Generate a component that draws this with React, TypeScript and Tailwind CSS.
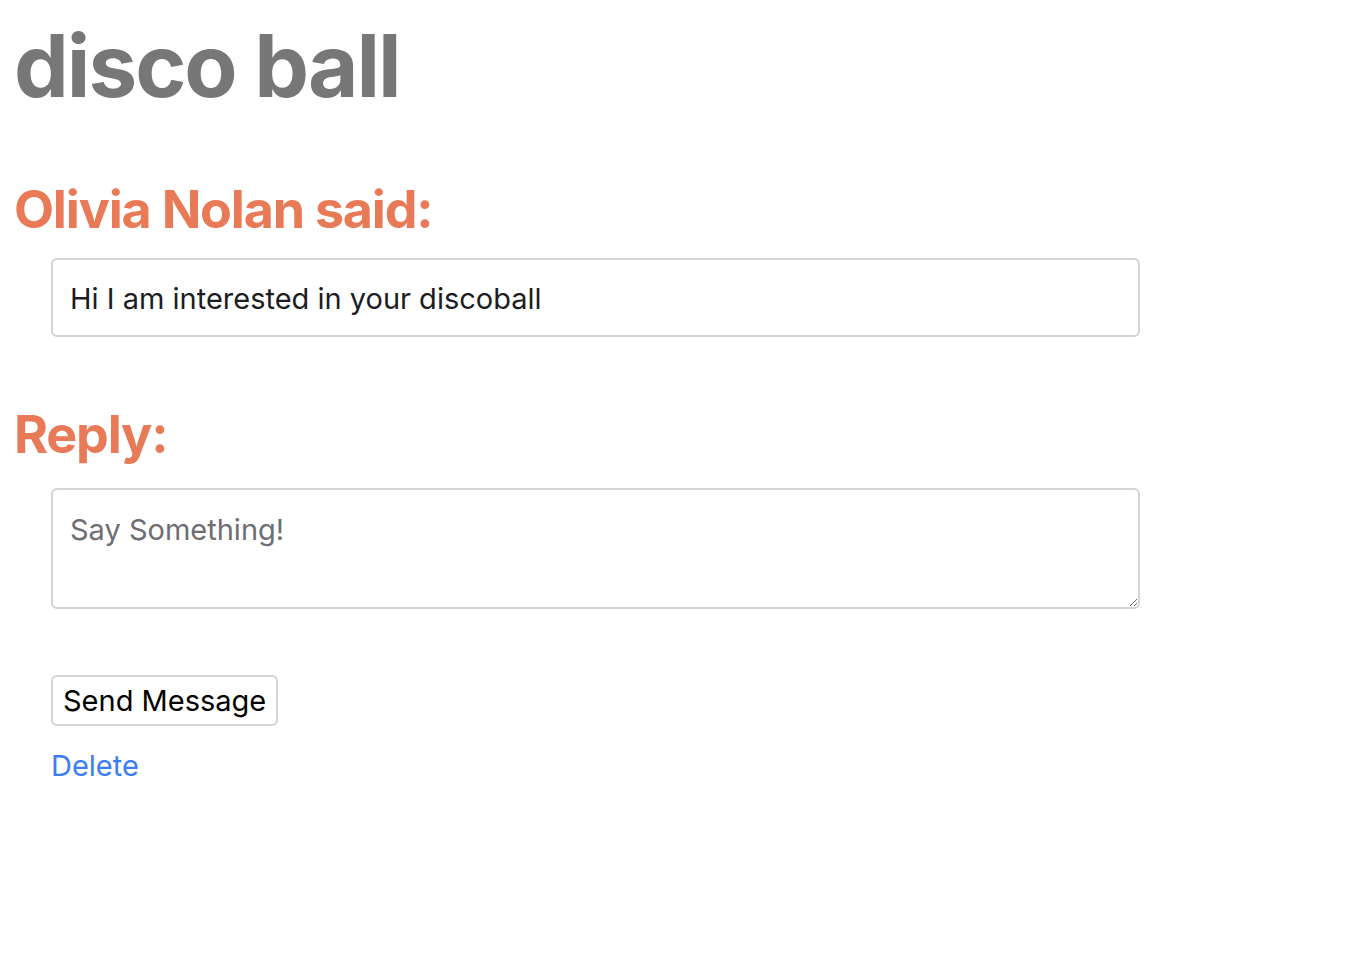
import React from "react";

export default function App() {
  return (
    <div className="min-h-[978px] bg-white px-[14px] pt-[18px]" style={{ fontFamily: "Inter, 'Noto Sans', sans-serif" }}>
      <h1 className="text-[87px] font-bold leading-[96px] tracking-[-2px] text-[#777777]">disco ball</h1>
      <h2 className="mt-[66px] text-[52px] font-bold leading-[60px] tracking-[-1.2px] text-[#e97a57]">Olivia Nolan said:</h2>
      <div className="ml-[37px] mt-[18px] flex h-[79px] w-[1089px] items-center rounded-[6px] border-2 border-[#d2d4d8] px-[17px] pt-[3px] text-[29px] leading-[36px] text-[#1d1d1f]">
        Hi I am interested in your discoball
      </div>
      <h2 className="mt-[68px] text-[52px] font-bold leading-[60px] tracking-[-1.2px] text-[#e97a57]">Reply:</h2>
      <div className="ml-[37px] mt-[23px] w-[1089px]">
        <textarea
          placeholder="Say Something!"
          className="block h-[121px] w-full rounded-[6px] border-2 border-[#d2d4d8] px-[17px] pt-[22px] pb-[18px] text-[29px] leading-[36px] text-[#1d1d1f] placeholder:text-[#6e6e73] outline-none"
        />
        <button className="mt-[66px] h-[51px] rounded-[6px] border-2 border-[#d2d4d8] bg-white px-[10px] text-[29px] leading-[36px] text-black">
          Send Message
        </button>
        <div className="mt-[22px] leading-[36px]">
          <a href="#" className="text-[29px] text-[#3b7df5]">Delete</a>
        </div>
      </div>
    </div>
  );
}
